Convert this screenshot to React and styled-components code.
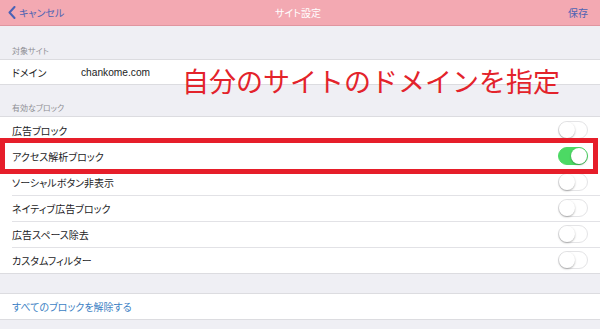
import React from "react";
import styled, { createGlobalStyle } from "styled-components";

const GlobalStyle = createGlobalStyle`
  html, body {
    margin: 0;
    padding: 0;
    background: #efeff4;
  }
  body {
    font-family: "Noto Sans CJK JP", "Noto Sans", sans-serif;
    font-feature-settings: "palt";
  }
`;

const blocks = [
  { label: "広告ブロック", on: false },
  { label: "アクセス解析ブロック", on: true, marked: true },
  { label: "ソーシャルボタン非表示", on: false },
  { label: "ネイティブ広告ブロック", on: false },
  { label: "広告スペース除去", on: false },
  { label: "カスタムフィルター", on: false },
];

export default function App() {
  return (
    <Page>
      <GlobalStyle />
      <NavBar>
        <NavButton>
          <svg width="8" height="13" viewBox="0 0 8 13">
            <path
              d="M6.5 1 L1.5 6.5 L6.5 12"
              fill="none"
              stroke="#4a62b6"
              strokeWidth="2"
              strokeLinecap="round"
              strokeLinejoin="round"
            />
          </svg>
          キャンセル
        </NavButton>
        <NavTitle>サイト設定</NavTitle>
        <NavButton $right>保存</NavButton>
      </NavBar>

      <SectionHeader $h={33}>対象サイト</SectionHeader>
      <Group>
        <Row $h={24}>
          <Label>ドメイン</Label>
          <Value>chankome.com</Value>
        </Row>
      </Group>

      <SectionHeader $h={31}>有効なブロック</SectionHeader>
      <Group>
        {blocks.map((b) => (
          <Row key={b.label} $marked={b.marked}>
            <Label>{b.label}</Label>
            <Toggle $on={b.on}>
              <Knob />
            </Toggle>
          </Row>
        ))}
      </Group>

      <Spacer />
      <Group>
        <Row $h={25}>
          <LinkText>すべてのブロックを解除する</LinkText>
        </Row>
      </Group>

      <Annotation>自分のサイトのドメインを指定</Annotation>
    </Page>
  );
}

const Page = styled.div`
  position: relative;
  width: 600px;
  height: 329px;
  overflow: hidden;
  background: #efeff4;
`;

const NavBar = styled.header`
  height: 26px;
  box-sizing: border-box;
  background: #f3a9b2;
  border-bottom: 1px solid #e0959f;
  display: flex;
  align-items: center;
  justify-content: space-between;
  padding: 0 12px 0 8px;
`;

const NavButton = styled.div`
  display: flex;
  align-items: center;
  gap: 3px;
  font-size: 10px;
  color: #4d63b3;
  width: 80px;
  justify-content: ${(p) => (p.$right ? "flex-end" : "flex-start")};
`;

const NavTitle = styled.div`
  font-size: 10px;
  color: #ffffff;
`;

const SectionHeader = styled.div`
  height: ${(p) => p.$h}px;
  box-sizing: border-box;
  display: flex;
  align-items: flex-end;
  padding: 0 0 3px 12px;
  font-size: 8px;
  color: #8e8e93;
`;

const Group = styled.section`
  background: #ffffff;
  border-top: 1px solid #dcdce0;
  border-bottom: 1px solid #dcdce0;
`;

const Row = styled.div`
  position: relative;
  height: ${(p) => p.$h || 26}px;
  box-sizing: border-box;
  display: flex;
  align-items: center;
  padding: 0 12px;

  & + &::before {
    content: "";
    position: absolute;
    top: 0;
    left: 12px;
    right: 0;
    height: 1px;
    background: #e2e2e6;
  }

  ${(p) =>
    p.$marked &&
    `
    &::after {
      content: "";
      position: absolute;
      z-index: 2;
      left: 0;
      right: 2px;
      top: -5px;
      bottom: -5px;
      border: 5px solid #e61e2a;
      pointer-events: none;
    }
  `}
`;

const Label = styled.span`
  font-size: 10px;
  color: #1c1c1e;
  white-space: nowrap;
  flex: 1 0 auto;
`;

const Value = styled.span`
  position: absolute;
  left: 81px;
  font-family: "Liberation Sans", "Noto Sans", sans-serif;
  font-size: 10.2px;
  color: #1c1c1e;
`;

const LinkText = styled.span`
  font-size: 10px;
  color: #3c7fc4;
`;

const Toggle = styled.div`
  width: 30px;
  height: 18px;
  box-sizing: border-box;
  border-radius: 9px;
  background: ${(p) => (p.$on ? "#4cd964" : "#ffffff")};
  border: 1px solid ${(p) => (p.$on ? "#4cd964" : "#e4e4e6")};
  display: flex;
  align-items: center;
  justify-content: ${(p) => (p.$on ? "flex-end" : "flex-start")};
`;

const Knob = styled.div`
  width: 16px;
  height: 16px;
  border-radius: 50%;
  background: #ffffff;
  box-shadow: 0 1px 2px rgba(0, 0, 0, 0.3);
`;

const Spacer = styled.div`
  height: 19px;
`;

const Annotation = styled.div`
  position: absolute;
  left: 182px;
  top: 63px;
  font-size: 27px;
  line-height: 36px;
  color: #e3232b;
  font-feature-settings: normal;
  white-space: nowrap;
`;
